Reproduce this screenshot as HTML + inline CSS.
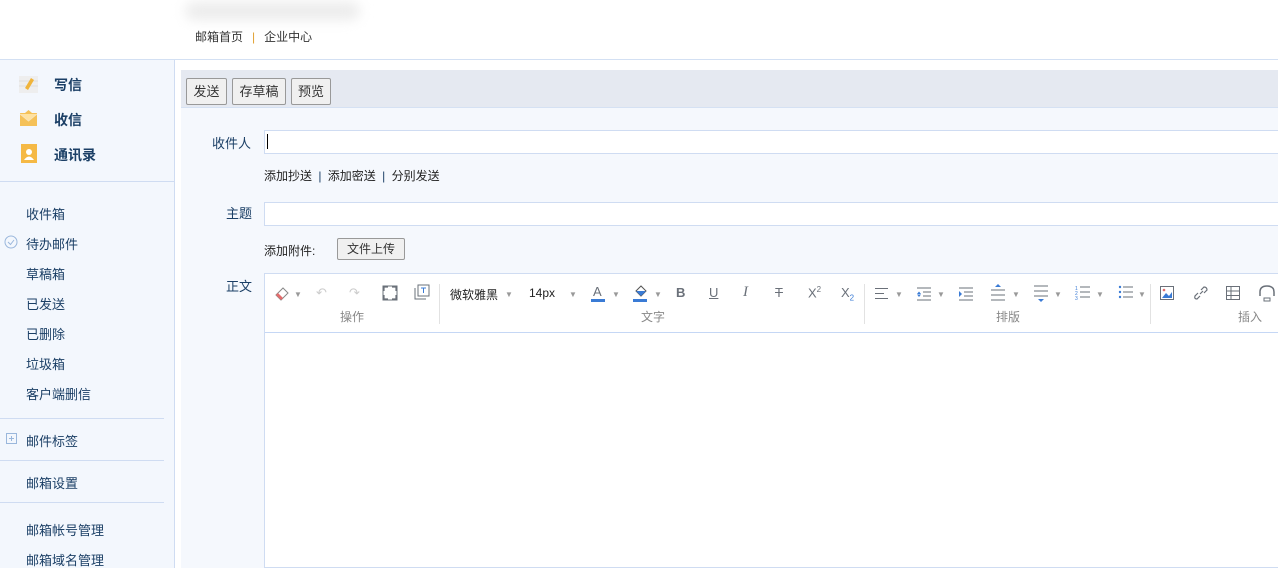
<!DOCTYPE html>
<html><head><meta charset="utf-8"><style>
*{margin:0;padding:0;box-sizing:border-box}
body{width:1278px;height:568px;overflow:hidden;background:#fff;font-family:"Liberation Sans","Microsoft YaHei","Noto Sans CJK SC",sans-serif;font-size:13px;color:#333;position:relative}
.a{position:absolute}
.blur{left:185px;top:2px;width:175px;height:18px;background:#ececec;filter:blur(6px);border-radius:9px}
.top{left:195px;top:28px;font-size:12px;color:#333}
.top .s{color:#e0a030;margin:0 9px}
.hline{left:0;top:59px;width:1278px;height:1px;background:#d3e0f3}
.side{left:0;top:60px;width:175px;height:508px;background:#f3f7fd;border-right:1px solid #cfdcf2}
.big{left:54px;font-size:14px;font-weight:bold;color:#1b3f66}
.it{left:26px;font-size:13px;color:#1b3f66}
.sl{height:1px;background:#cfdcf2}
.panel{left:181px;top:70px;width:1097px;height:498px;background:#f5f8fd}
.tb{left:181px;top:70px;width:1097px;height:38px;background:#e5e9f1;border-bottom:1px solid #d5e1f3}
.btn{top:78px;height:27px;border:1px solid #999;border-radius:2px;background:#f0f0f0;font-size:13px;line-height:25px;text-align:center;color:#333}
.lbl{font-size:13px;color:#1b3f66}
.inp{left:264px;width:1014px;height:24px;background:#fff;border:1px solid #cfdcf2;border-right:none}
.ed{left:264px;top:273px;width:1014px;height:295px;background:#fff;border:1px solid #cfdcf2;border-right:none}
.etb{left:265px;top:274px;width:1013px;height:59px;border-bottom:1px solid #c5d7f5;background:#fff}
.g{font-size:12px;color:#888}
.ic{color:#6a7079;font-size:13px}
.dv{top:284px;width:1px;height:40px;background:#e2e2e2}
.car{font-size:8px;color:#999}
</style></head><body>
<div class="a blur"></div>
<div class="a top">邮箱首页<span class="s">|</span>企业中心</div>
<div class="a hline"></div>
<div class="a side"></div>
<svg class="a" style="left:19px;top:74px" width="20" height="20"><rect x="0" y="2" width="19" height="17" fill="#eee"/><line x1="0" y1="7" x2="19" y2="7" stroke="#ddd"/><line x1="0" y1="12" x2="19" y2="12" stroke="#ddd"/><path d="M6 14 L12 4 L15 6 L9 16 Z" fill="#f0b43a"/></svg>
<svg class="a" style="left:20px;top:109px" width="18" height="18"><rect x="0" y="4" width="17" height="13" fill="#f5c158"/><path d="M0 5 L8.5 12 L17 5" fill="#ffe2a0" stroke="#f8e3b8"/><path d="M5 4 L8.5 1 L12 4" fill="#f5c158"/></svg>
<svg class="a" style="left:20px;top:144px" width="18" height="20"><rect x="1" y="0" width="16" height="19" fill="#f5b945"/><circle cx="9" cy="8" r="3" fill="#fff"/><path d="M4 16 Q9 9 14 16 Z" fill="#fff"/></svg>
<div class="a big" style="top:75px">写信</div>
<div class="a big" style="top:110px">收信</div>
<div class="a big" style="top:145px">通讯录</div>
<div class="a sl" style="left:0;top:181px;width:175px"></div>
<div class="a it" style="top:204px">收件箱</div>
<svg class="a" style="left:4px;top:235px" width="14" height="14"><circle cx="7" cy="7" r="6" fill="none" stroke="#9ab7dc"/><path d="M4 7 L6.5 9.5 L10 5" fill="none" stroke="#9ab7dc"/></svg>
<div class="a it" style="top:234px">待办邮件</div>
<div class="a it" style="top:264px">草稿箱</div>
<div class="a it" style="top:294px">已发送</div>
<div class="a it" style="top:324px">已删除</div>
<div class="a it" style="top:354px">垃圾箱</div>
<div class="a it" style="top:384px">客户端删信</div>
<div class="a sl" style="left:0;top:418px;width:164px"></div>
<svg class="a" style="left:6px;top:433px" width="12" height="12"><rect x="0.5" y="0.5" width="10" height="10" fill="none" stroke="#9ab7dc"/><path d="M3 5.5 H8 M5.5 3 V8" stroke="#9ab7dc"/></svg>
<div class="a it" style="top:431px">邮件标签</div>
<div class="a sl" style="left:0;top:460px;width:164px"></div>
<div class="a it" style="top:473px">邮箱设置</div>
<div class="a sl" style="left:0;top:502px;width:164px"></div>
<div class="a it" style="top:520px">邮箱帐号管理</div>
<div class="a it" style="top:550px">邮箱域名管理</div>

<div class="a panel"></div>
<div class="a tb"></div>
<div class="a btn" style="left:186px;width:41px">发送</div>
<div class="a btn" style="left:232px;width:54px">存草稿</div>
<div class="a btn" style="left:291px;width:40px">预览</div>

<div class="a lbl" style="left:212px;top:133px">收件人</div>
<div class="a inp" style="top:130px"></div>
<div class="a" style="left:267px;top:134px;width:1px;height:15px;background:#000"></div>
<div class="a" style="left:264px;top:167px;font-size:12px;color:#222">添加抄送 <span style="color:#1b3f66;margin:0 3px">|</span> 添加密送 <span style="color:#1b3f66;margin:0 3px">|</span> 分别发送</div>
<div class="a lbl" style="left:226px;top:203px">主题</div>
<div class="a inp" style="top:202px"></div>
<div class="a" style="left:264px;top:242px;font-size:12px;color:#222">添加附件:</div>
<div class="a" style="left:337px;top:238px;width:68px;height:22px;border:1px solid #999;border-radius:2px;background:#f0f0f0;font-size:12px;line-height:20px;text-align:center">文件上传</div>
<div class="a lbl" style="left:226px;top:276px">正文</div>
<div class="a ed"></div>
<div class="a etb"></div>
<svg class="a" style="left:274px;top:285px" width="16" height="16"><path d="M2 10 L9 3 L14 8 L7 15 Z" fill="none" stroke="#888"/><path d="M2 10 L7 15 L9 13 L4 8 Z" fill="#e36c6c"/></svg>
<span class="a car" style="left:294px;top:290px">▼</span>
<span class="a ic" style="left:316px;top:285px;color:#ccc">↶</span>
<span class="a ic" style="left:349px;top:285px;color:#ccc">↷</span>
<svg class="a" style="left:382px;top:285px" width="16" height="16"><path d="M2 6V2H6M10 2H14V6M14 10V14H10M6 14H2V10" fill="none" stroke="#6a7079" stroke-width="1.2"/><rect x="1" y="1" width="14" height="14" fill="none" stroke="#6a7079"/></svg>
<svg class="a" style="left:414px;top:284px" width="16" height="16"><rect x="4" y="1" width="11" height="11" fill="none" stroke="#6a7079"/><path d="M1 4V15H12" fill="none" stroke="#6a7079"/><path d="M7 4H12M9.5 4V9" stroke="#3a7bd5"/></svg>
<div class="a g" style="left:340px;top:308px">操作</div>
<div class="a dv" style="left:439px"></div>
<div class="a" style="left:450px;top:286px;font-size:12px;color:#222">微软雅黑</div>
<span class="a car" style="left:505px;top:290px">▼</span>
<div class="a" style="left:529px;top:286px;font-size:12px;color:#222">14px</div>
<span class="a car" style="left:569px;top:290px">▼</span>
<div class="a ic" style="left:593px;top:284px">A</div>
<div class="a" style="left:591px;top:299px;width:14px;height:3px;background:#3a7bd5"></div>
<span class="a car" style="left:612px;top:290px">▼</span>
<svg class="a" style="left:633px;top:284px" width="16" height="14"><path d="M3 7 L8 2 L13 7 L8 12 Z" fill="#fff" stroke="#555"/><path d="M3 7 H13 L8 12 Z" fill="#3a7bd5"/></svg>
<div class="a" style="left:633px;top:299px;width:14px;height:3px;background:#3a7bd5"></div>
<span class="a car" style="left:654px;top:290px">▼</span>
<div class="a ic" style="left:676px;top:285px;font-weight:bold">B</div>
<div class="a ic" style="left:709px;top:285px;text-decoration:underline">U</div>
<div class="a ic" style="left:743px;top:284px;font-family:'Liberation Serif',serif;font-style:italic;font-size:15px">I</div>
<div class="a ic" style="left:775px;top:285px;text-decoration:line-through">T</div>
<div class="a ic" style="left:808px;top:285px">X<sup style="font-size:8px">2</sup></div>
<div class="a ic" style="left:841px;top:285px">X<sub style="font-size:8px;color:#3a7bd5">2</sub></div>
<div class="a g" style="left:641px;top:308px">文字</div>
<div class="a dv" style="left:864px"></div>
<svg class="a" style="left:874px;top:287px" width="16" height="14"><path d="M1 1.5H14M1 6.5H10M1 11.5H14" stroke="#6a7079"/></svg>
<span class="a car" style="left:895px;top:290px">▼</span>
<svg class="a" style="left:916px;top:286px" width="16" height="16"><path d="M1 2H15M7 6H15M7 10H15M1 14H15" stroke="#6a7079"/><path d="M1 8 L3 5.5 L5 8Z M1 8.5L3 11L5 8.5Z" fill="#3a7bd5"/></svg>
<span class="a car" style="left:937px;top:290px">▼</span>
<svg class="a" style="left:958px;top:286px" width="16" height="16"><path d="M1 2H15M6 6H15M6 10H15M1 14H15" stroke="#6a7079"/><path d="M1 5L4 8L1 11Z" fill="#3a7bd5"/></svg>
<svg class="a" style="left:990px;top:284px" width="16" height="18"><path d="M5 3L8 0L11 3Z" fill="#3a7bd5"/><path d="M1 6H15M1 11H15M1 16H15" stroke="#6a7079"/></svg>
<span class="a car" style="left:1012px;top:290px">▼</span>
<svg class="a" style="left:1033px;top:285px" width="16" height="18"><path d="M1 1H15M1 6H15M1 11H15" stroke="#6a7079"/><path d="M5 14L8 17L11 14Z" fill="#3a7bd5"/></svg>
<span class="a car" style="left:1054px;top:290px">▼</span>
<svg class="a" style="left:1075px;top:285px" width="16" height="16"><path d="M5 2H15M5 7H15M5 12H15" stroke="#6a7079"/><text x="0" y="5" font-size="5" fill="#3a7bd5">1</text><text x="0" y="10" font-size="5" fill="#3a7bd5">2</text><text x="0" y="15" font-size="5" fill="#3a7bd5">3</text></svg>
<span class="a car" style="left:1096px;top:290px">▼</span>
<svg class="a" style="left:1118px;top:285px" width="16" height="16"><path d="M5 2H15M5 7H15M5 12H15" stroke="#6a7079"/><circle cx="2" cy="2" r="1.2" fill="#3a7bd5"/><circle cx="2" cy="7" r="1.2" fill="#3a7bd5"/><circle cx="2" cy="12" r="1.2" fill="#3a7bd5"/></svg>
<span class="a car" style="left:1138px;top:290px">▼</span>
<div class="a g" style="left:996px;top:308px">排版</div>
<div class="a dv" style="left:1150px"></div>
<svg class="a" style="left:1160px;top:286px" width="15" height="15"><rect x="0.5" y="0.5" width="13" height="13" fill="none" stroke="#6a7079"/><path d="M2 12L6 7L9 10L12 6V12Z" fill="#3a7bd5"/><circle cx="4" cy="4" r="1.3" fill="#e36c6c"/></svg>
<svg class="a" style="left:1193px;top:285px" width="16" height="16"><path d="M7 9L10 6M5 8L2 11Q1 14 4 14L7 11M11 8L14 5Q14 2 11 2L8 5" fill="none" stroke="#6a7079" stroke-width="1.2"/></svg>
<svg class="a" style="left:1226px;top:286px" width="15" height="15"><rect x="0.5" y="0.5" width="13" height="13" fill="none" stroke="#6a7079"/><path d="M0 5H14M0 9.5H14M5 0V14" stroke="#6a7079"/></svg>
<svg class="a" style="left:1258px;top:284px" width="20" height="18"><path d="M2 12V8Q2 2 9 2Q16 2 16 8V12" fill="none" stroke="#6a7079" stroke-width="1.5"/><rect x="6" y="14" width="6" height="3" fill="none" stroke="#6a7079"/></svg>
<div class="a g" style="left:1238px;top:308px">插入</div>
</body></html>
